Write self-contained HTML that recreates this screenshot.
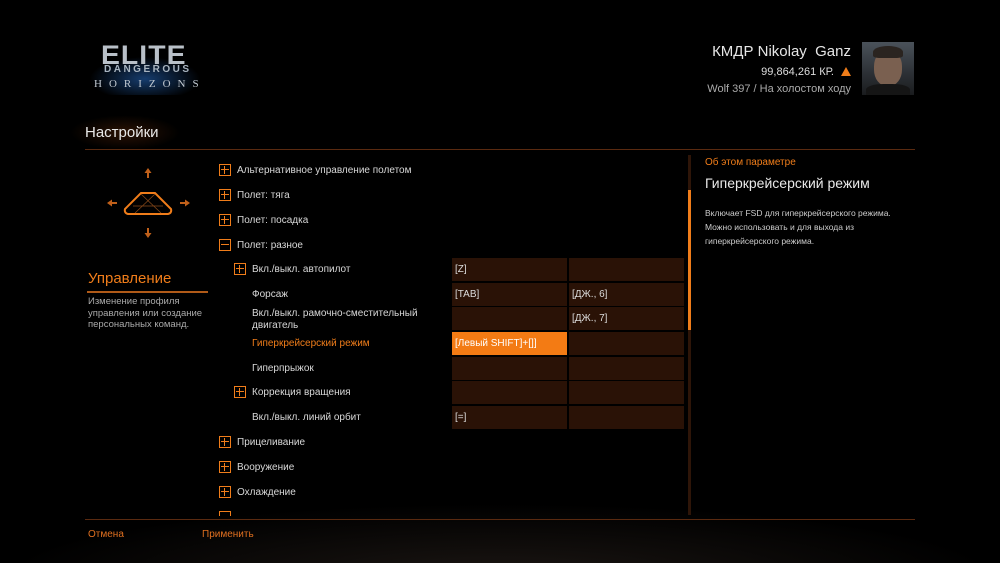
<!DOCTYPE html>
<html><head><meta charset="utf-8"><style>
*{margin:0;padding:0;box-sizing:border-box}
body{width:1000px;height:563px;background:#000;position:relative;overflow:hidden;font-family:"Liberation Sans","DejaVu Sans",sans-serif;color:#d8d8d8}
.a{position:absolute;white-space:nowrap}
.box{position:absolute;width:12px;height:12px;border:1.5px solid #f07d1a}
.box:before{content:"";position:absolute;left:1px;right:1px;top:3.7px;height:1.6px;background:#f07d1a}
.box.p:after{content:"";position:absolute;top:1px;bottom:1px;left:3.7px;width:1.6px;background:#f07d1a}
.t{font-size:10px;color:#d8d8d8}
.c{position:absolute;height:23px;background:#2a1206;font-size:10px;color:#ddd;padding:6px 0 0 3px}
</style></head><body>
<div style="position:absolute;left:0;right:0;bottom:0;height:60px;background:radial-gradient(ellipse at 50% 120%,#1a1512,#000 70%)"></div>
<!-- logo -->
<div style="position:absolute;left:85px;top:55px;width:120px;height:40px;background:radial-gradient(ellipse at 50% 60%,rgba(40,110,200,.55),rgba(0,0,0,0) 65%)"></div>
<div class="a" style="left:103px;top:40px;font-size:27px;font-weight:bold;color:#b9c0c8;letter-spacing:1px;transform:scaleX(1.05)">ELITE</div>
<div class="a" style="left:104px;top:64px;font-size:10px;font-weight:bold;color:#a8b4c0;letter-spacing:2.5px">DANGEROUS</div>
<div class="a" style="left:94px;top:78px;font-size:11px;font-family:'Liberation Serif',serif;color:#c0c8d0;letter-spacing:7px">HORIZONS</div>
<!-- commander -->
<div class="a" style="right:149px;top:43px;font-size:15px;color:#e6e6e6">КМДР Nikolay&nbsp; Ganz</div>
<div class="a" style="right:166px;top:66px;font-size:11px;color:#ddd">99,864,261 КР.</div>
<div class="a" style="left:841px;top:67px;width:0;height:0;border-left:5px solid transparent;border-right:5px solid transparent;border-bottom:9px solid #f07d1a"></div>
<div class="a" style="right:149px;top:83px;font-size:11px;color:#aaa">Wolf 397 / На холостом ходу</div>
<div class="a" style="left:862px;top:42px;width:52px;height:53px;background:linear-gradient(180deg,#4a525a,#2c3035 60%,#1a1c1e);overflow:hidden"><div style="position:absolute;left:12px;top:8px;width:28px;height:36px;border-radius:45%;background:#7a6050"></div><div style="position:absolute;left:11px;top:4px;width:30px;height:12px;border-radius:50% 50% 20% 20%;background:#2a2420"></div><div style="position:absolute;left:4px;top:42px;width:44px;height:14px;border-radius:40% 40% 0 0;background:#151515"></div></div>
<!-- header -->
<div class="a" style="left:70px;top:115px;width:110px;height:35px;background:radial-gradient(ellipse,rgba(120,50,10,.35),rgba(0,0,0,0) 70%)"></div>
<div class="a" style="left:85px;top:124px;font-size:15px;color:#e8e8e8">Настройки</div>
<div class="a" style="left:85px;top:149px;width:830px;height:1px;background:#5a2a10"></div>
<!-- icon -->
<svg class="a" style="left:90px;top:150px" width="110" height="100" viewBox="90 150 110 100">
<g fill="#c0601a"><path d="M148 168l-3.5 5h2.5v5h2v-5h2.5z"/><path d="M148 238l-3.5-5h2.5v-5h2v5h2.5z"/><path d="M107 203l5-3.5v2.5h5v2h-5v2.5z"/><path d="M190 203l-5-3.5v2.5h-5v2h5v2.5z"/></g>
<path d="M141 193h14l16 16q1 4-3 5h-40q-4-1-3-5z" fill="none" stroke="#f07d1a" stroke-width="2"/>
<path d="M141 194l20 19M155 194l-20 19M133 206h30" stroke="#8a4a1a" stroke-width="0.7" fill="none"/>
</svg>
<!-- left panel -->
<div class="a" style="left:88px;top:270px;font-size:15px;color:#f07d1a">Управление</div>
<div class="a" style="left:87px;top:291px;width:121px;height:2px;background:#b05a18"></div>
<div class="a" style="left:88px;top:296px;font-size:9.5px;line-height:11.5px;color:#aaa">Изменение профиля<br>управления или создание<br>персональных команд.</div>
<!-- tree -->
<div class="box p" style="left:219px;top:164px"></div><div class="a t" style="left:237px;top:165px">Альтернативное управление полетом</div>
<div class="box p" style="left:219px;top:189px"></div><div class="a t" style="left:237px;top:190px">Полет: тяга</div>
<div class="box p" style="left:219px;top:214px"></div><div class="a t" style="left:237px;top:215px">Полет: посадка</div>
<div class="box" style="left:219px;top:239px"></div><div class="a t" style="left:237px;top:240px">Полет: разное</div>
<div class="box p" style="left:234px;top:263px"></div><div class="a t" style="left:252px;top:264px">Вкл./выкл. автопилот</div>
<div class="a t" style="left:252px;top:289px">Форсаж</div>
<div class="a t" style="left:252px;top:308px;line-height:12px">Вкл./выкл. рамочно-сместительный<br>двигатель</div>
<div class="a t" style="left:252px;top:338px;color:#f07d1a">Гиперкрейсерский режим</div>
<div class="a t" style="left:252px;top:363px">Гиперпрыжок</div>
<div class="box p" style="left:234px;top:386px"></div><div class="a t" style="left:252px;top:387px">Коррекция вращения</div>
<div class="a t" style="left:252px;top:412px">Вкл./выкл. линий орбит</div>
<div class="box p" style="left:219px;top:436px"></div><div class="a t" style="left:237px;top:437px">Прицеливание</div>
<div class="box p" style="left:219px;top:461px"></div><div class="a t" style="left:237px;top:462px">Вооружение</div>
<div class="box p" style="left:219px;top:486px"></div><div class="a t" style="left:237px;top:487px">Охлаждение</div>
<div class="a" style="left:219px;top:511px;width:12px;height:5px;border:1.5px solid #f07d1a;border-bottom:none"></div>
<!-- table -->
<div class="c" style="left:452px;top:258px;width:115px">[Z]</div><div class="c" style="left:569px;top:258px;width:115px"></div>
<div class="c" style="left:452px;top:283px;width:115px">[TAB]</div><div class="c" style="left:569px;top:283px;width:115px">[ДЖ., 6]</div>
<div class="c" style="left:452px;top:307px;width:115px"></div><div class="c" style="left:569px;top:307px;width:115px">[ДЖ., 7]</div>
<div class="c" style="left:452px;top:332px;width:115px;background:#f37b14;color:#fff">[Левый SHIFT]+[]]</div><div class="c" style="left:569px;top:332px;width:115px"></div>
<div class="c" style="left:452px;top:357px;width:115px"></div><div class="c" style="left:569px;top:357px;width:115px"></div>
<div class="c" style="left:452px;top:381px;width:115px"></div><div class="c" style="left:569px;top:381px;width:115px"></div>
<div class="c" style="left:452px;top:406px;width:115px">[=]</div><div class="c" style="left:569px;top:406px;width:115px"></div>
<!-- scrollbar -->
<div class="a" style="left:688px;top:155px;width:3px;height:360px;background:#2e1508"></div>
<div class="a" style="left:688px;top:190px;width:3px;height:140px;background:#f07d1a"></div>
<!-- right panel -->
<div class="a" style="left:705px;top:157px;font-size:10px;color:#f07d1a">Об этом параметре</div>
<div class="a" style="left:705px;top:175px;font-size:14px;color:#e8e8e8">Гиперкрейсерский режим</div>
<div class="a" style="left:705px;top:206px;font-size:8.5px;line-height:14px;color:#ccc">Включает FSD для гиперкрейсерского режима.<br>Можно использовать и для выхода из<br>гиперкрейсерского режима.</div>
<!-- footer -->
<div class="a" style="left:85px;top:519px;width:830px;height:1px;background:#5a2a10"></div>
<div class="a" style="left:88px;top:529px;font-size:10px;color:#e07020">Отмена</div>
<div class="a" style="left:202px;top:529px;font-size:10px;color:#e07020">Применить</div>
</body></html>
